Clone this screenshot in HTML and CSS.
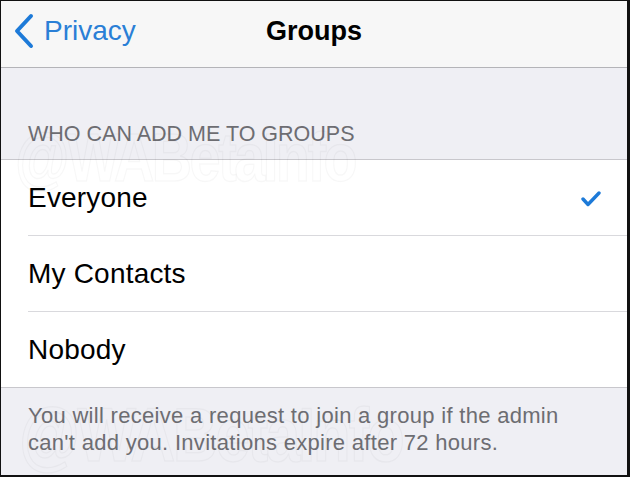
FILE: index.html
```html
<!DOCTYPE html>
<html lang="en">
<head>
  <meta charset="UTF-8">
  <meta name="viewport" content="width=device-width, initial-scale=1.0">
  <title>Groups</title>
  <link rel="stylesheet" href="styles.css">
</head>
<body>
  <div class="screen">
    <div class="nav-bar">
      <a class="back-link" href="#">
        <svg class="chevron" width="22" height="36" viewBox="0 0 22 36">
          <polyline points="18,3 4,18 18,33" fill="none" stroke="#1d7ad8" stroke-width="4" stroke-linecap="round" stroke-linejoin="round"/>
        </svg>
        <span>Privacy</span>
      </a>
      <h1 class="nav-title">Groups</h1>
    </div>

    <div class="section-header">WHO CAN ADD ME TO GROUPS</div>

    <ul class="option-list">
      <li class="option-row">
        <span>Everyone</span>
        <svg class="check" width="20" height="16" viewBox="0 0 20 16">
          <polyline points="2,8 7,13.5 18,2" fill="none" stroke="#1d7ad8" stroke-width="3.4" stroke-linecap="round" stroke-linejoin="round"/>
        </svg>
      </li>
      <li class="option-row"><span>My Contacts</span></li>
      <li class="option-row"><span>Nobody</span></li>
    </ul>

    <div class="section-footer">
      You will receive a request to join a group if the admin<br>
      can't add you. Invitations expire after 72 hours.
    </div>

    <div class="watermark wm-top" aria-hidden="true">@WABetaInfo</div>
    <div class="watermark wm-bottom" aria-hidden="true">@WABetaInfo</div>
  </div>
</body>
</html>
```

FILE: styles.css
```css
body {
  margin: 0;
  background-color: #111;
  font-family: 'Liberation Sans', Arial, sans-serif;
}

.screen {
  position: relative;
  width: 626px;
  height: 474px;
  margin: 1px 0 0 1px;
  background-color: #efeff4;
  overflow: hidden;
}

.nav-bar {
  display: flex;
  align-items: center;
  justify-content: center;
  position: relative;
  height: 67px;
  box-sizing: border-box;
  padding-bottom: 6px;
  background-color: #f7f7f7;
  border-bottom: 1px solid #b4b4b8;
}

.back-link {
  position: absolute;
  left: 12px;
  top: 12px;
  display: flex;
  align-items: center;
  gap: 9px;
  color: #2a7fd6;
  font-size: 28px;
  text-decoration: none;
}

.nav-title {
  margin: 0;
  font-size: 27px;
  font-weight: bold;
  color: #000;
}

.section-header {
  height: 92px;
  box-sizing: border-box;
  padding: 0 0 12px 27px;
  display: flex;
  align-items: flex-end;
  font-size: 21.5px;
  color: #6d6d72;
  border-bottom: 1px solid #c8c7cc;
}

.option-list {
  list-style: none;
  margin: 0;
  padding: 0;
  background-color: #fff;
  border-bottom: 1px solid #c8c7cc;
}

.option-row {
  display: flex;
  align-items: center;
  justify-content: space-between;
  height: 75px;
  margin-left: 27px;
  padding-right: 26px;
  font-size: 28px;
  letter-spacing: 0.2px;
  color: #000;
  border-bottom: 1px solid #d9d9dd;
}

.option-row:last-child {
  border-bottom: none;
}

.check {
  margin-top: 2px;
}

.section-footer {
  padding: 14px 0 0 27px;
  font-size: 22px;
  letter-spacing: 0.3px;
  line-height: 27px;
  color: #6d6d72;
}

/* faint outlined watermark that sits over the list */
.watermark {
  position: absolute;
  font-size: 68px;
  line-height: 1;
  font-weight: bold;
  letter-spacing: -3px;
  color: transparent;
  -webkit-text-stroke: 1.5px rgba(0, 0, 0, 0.03);
  transform: scaleX(0.82);
  transform-origin: left top;
  pointer-events: none;
}

.wm-top {
  left: 14px;
  top: 122px;
}

.wm-bottom {
  left: 18px;
  top: 396px;
  font-size: 76px;
}
```
